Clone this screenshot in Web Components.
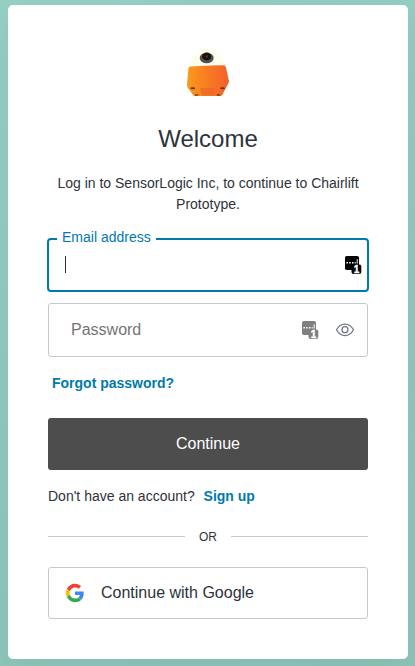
<!DOCTYPE html>
<html lang="en">
<head>
<meta charset="utf-8">
<title>Log in</title>
<style>
html,body{margin:0;height:100%}
body{box-sizing:border-box;padding-top:5px;font-family:"Liberation Sans",Arial,sans-serif;font-size:14px;color:#2d333a;background:linear-gradient(160deg,#96cfc4,#8cc3b8);overflow:hidden}
</style>
</head>
<body>
<login-card></login-card>
<script>
function define(name, html) {
  const template = document.createElement('template');
  template.innerHTML = html;
  customElements.define(name, class extends HTMLElement {
    constructor() {
      super();
      this.attachShadow({mode: 'open'}).append(template.content.cloneNode(true));
    }
  });
}

define('robot-logo', `<style>:host{display:block;width:44px;height:50px}svg{display:block}</style>
<svg width="44" height="50" viewBox="0 0 44 50">
<defs><linearGradient id="o" x1="0" y1="0" x2="1" y2="0"><stop offset="0" stop-color="#fb9a1e"/><stop offset=".28" stop-color="#f9881f"/><stop offset="1" stop-color="#f45f2b"/></linearGradient></defs>
<path d="M3 24C4 10 12 1 21 1S37 9 40.500 24Z" fill="#fcfdea"/>
<path d="M4.500 19.500Q15 19.200 25 18.600L37 18.300Q39.500 18.300 40 20.500L43 34.500L42 37L37.500 45.500Q36.500 49 34 49H9Q7 49 6 46.500L1.500 40.500Q1 39 1 37L2.500 21Q2.800 19.600 4.500 19.500Z" fill="url(#o)"/>
<path d="M16 48.500L14 41H29.500L27.500 48.500Z" fill="#ea6527" opacity=".65"/>
<ellipse cx="20.700" cy="11" rx="7" ry="5.200" fill="#55504f"/>
<ellipse cx="20.700" cy="9.500" rx="4.600" ry="3.900" fill="#171314"/><circle cx="20.700" cy="9.300" r="1.200" fill="#63301a"/>
<g fill="#6b3519"><ellipse cx="6.800" cy="41.300" rx="2.500" ry="1"/><ellipse cx="36.500" cy="41.300" rx="2.500" ry="1"/><ellipse cx="10.500" cy="48" rx="2" ry=".7"/><ellipse cx="32.500" cy="48" rx="2" ry=".7"/></g>
</svg>`);

define('vault-icon', `<style>:host{display:block;width:17px;height:19px}svg{display:block}text{font:bold 10px "Liberation Sans",sans-serif}</style>
<svg width="17" height="19" viewBox="0 0 17 19">
<rect width="14" height="14" rx="1.800" fill="currentColor"/>
<path d="M1.400 6h1.500v1.600H1.400zM4.200 6h1.500v1.600H4.200zM7 6h1.500v1.600H7zM9.700 6h1v1.600h-1zM11.700 3.300h1v4.300h-1z" fill="#fff"/>
<rect x="6.500" y="8.500" width="9.800" height="9.500" rx="2" fill="currentColor"/>
<text x="8.800" y="17" fill="#fff" stroke="#fff" stroke-width=".4">1</text>
</svg>`);

define('eye-icon', `<style>:host{display:block;width:20px;height:16px}svg{display:block}</style>
<svg width="20" height="16" viewBox="0 0 20 16" fill="none" stroke="#6f7780" stroke-width="1.250">
<path d="M1.500 7.700C3.500 4 6.400 2 10 2S16.500 4 18.500 7.700C16.500 11.500 13.600 13.500 10 13.500S3.500 11.500 1.500 7.700Z"/><circle cx="10" cy="7.700" r="3"/></svg>`);

define('google-icon', `<style>:host{display:block;width:20px;height:20px}svg{display:block}</style>
<svg width="20" height="20" viewBox="-2.300 -2.300 52.600 52.600">
<path fill="#EA4335" d="M24 9.500c3.540 0 6.710 1.220 9.210 3.600l6.850-6.850C35.900 2.380 30.470 0 24 0 14.620 0 6.510 5.380 2.560 13.220l7.980 6.190C12.430 13.720 17.740 9.500 24 9.500z"/>
<path fill="#4285F4" d="M46.980 24.550c0-1.570-.15-3.090-.38-4.550H24v9.020h12.940c-.58 2.960-2.260 5.480-4.780 7.180l7.730 6c4.510-4.180 7.090-10.360 7.090-17.650z"/>
<path fill="#FBBC05" d="M10.530 28.590c-.48-1.450-.76-2.990-.76-4.590s.27-3.140.76-4.590l-7.980-6.190C.92 16.460 0 20.120 0 24c0 3.880.92 7.540 2.560 10.780l7.970-6.190z"/>
<path fill="#34A853" d="M24 48c6.480 0 11.930-2.130 15.890-5.810l-7.730-6c-2.150 1.450-4.920 2.300-8.160 2.300-6.260 0-11.570-4.220-13.470-9.910l-7.980 6.190C6.510 42.620 14.620 48 24 48z"/></svg>`);

define('text-field', `<style>
:host{display:flex;align-items:center;box-sizing:border-box;height:54px;border:1px solid #c2c8d0;border-radius:3px;padding:0 12px 0 22px;font-size:16px;color:#757575;position:relative}
:host([active]){border:2px solid #0079ad;border-radius:4px;margin:0 -1px;padding:0 5px 0 16px}
.value{flex:1;line-height:20px}
:host([active]) .value::before{content:"";display:block;width:1px;height:17px;margin-bottom:1px;background:#2d333a}
.icons{display:flex;align-items:center;gap:16px}
.label{position:absolute;left:8px;top:-13px;padding:0 5px;background:#fff;color:#0079ad;font-size:14px;line-height:20px}
:host(:not([active])) .label{display:none}
</style><span class="label"><slot name="label"></slot></span><span class="value"><slot></slot></span><span class="icons"><slot name="icons"></slot></span>`);

define('action-link', `<style>:host{color:#007aad;font-weight:700}</style><slot></slot>`);

define('action-button', `<style>
:host{display:flex;align-items:center;justify-content:center;box-sizing:border-box;height:52px;border-radius:3px;background:#4d4d4d;color:#fff;font-size:16px;line-height:20px}
:host([outline]){background:#fff;color:#2d333a;border:1px solid #c2c8d0;justify-content:flex-start;padding:0 16px;gap:16px}
</style><slot name="icon"></slot><slot></slot>`);

define('or-divider', `<style>:host{display:flex;align-items:center;font-size:12px;line-height:18px}
:host::before,:host::after{content:"";flex:1;height:1px;margin-bottom:1px;background:#c2c8d0}span{width:46px;text-align:center}</style><span><slot></slot></span>`);

define('login-card', `<style>
:host{display:flex;flex-direction:column;box-sizing:border-box;width:400px;height:654px;margin-left:8px;padding:42px 40px 0;background:#fff;border-radius:5px;box-shadow:0 12px 40px rgba(0,0,0,.05)}
robot-logo{align-self:center}
h1{font-size:24px;font-weight:400;line-height:28px;margin:28px 0 0;text-align:center}
p{line-height:21px;margin:0}
.intro{text-align:center;margin-top:20px;padding:0 8px}
.email{margin-top:23px}.password{margin-top:11px}
.forgot{margin:16px 0 0 4px}.submit{margin-top:24px}
.signup{margin-top:16px}.signup action-link{margin-left:5px}
or-divider{margin-top:21px}.google{margin-top:21px}
.black{color:#000}.grey{color:#808080}
</style>
<robot-logo></robot-logo>
<h1>Welcome</h1>
<p class="intro">Log in to SensorLogic Inc, to continue to Chairlift Prototype.</p>
<text-field class="email" active><span slot="label">Email address</span><vault-icon class="black" slot="icons"></vault-icon></text-field>
<text-field class="password">Password<vault-icon class="grey" slot="icons"></vault-icon><eye-icon slot="icons"></eye-icon></text-field>
<p class="forgot"><action-link>Forgot password?</action-link></p>
<action-button class="submit">Continue</action-button>
<p class="signup">Don't have an account? <action-link>Sign up</action-link></p>
<or-divider>OR</or-divider>
<action-button class="google" outline><google-icon slot="icon"></google-icon>Continue with Google</action-button>`);
</script>
</body>
</html>
